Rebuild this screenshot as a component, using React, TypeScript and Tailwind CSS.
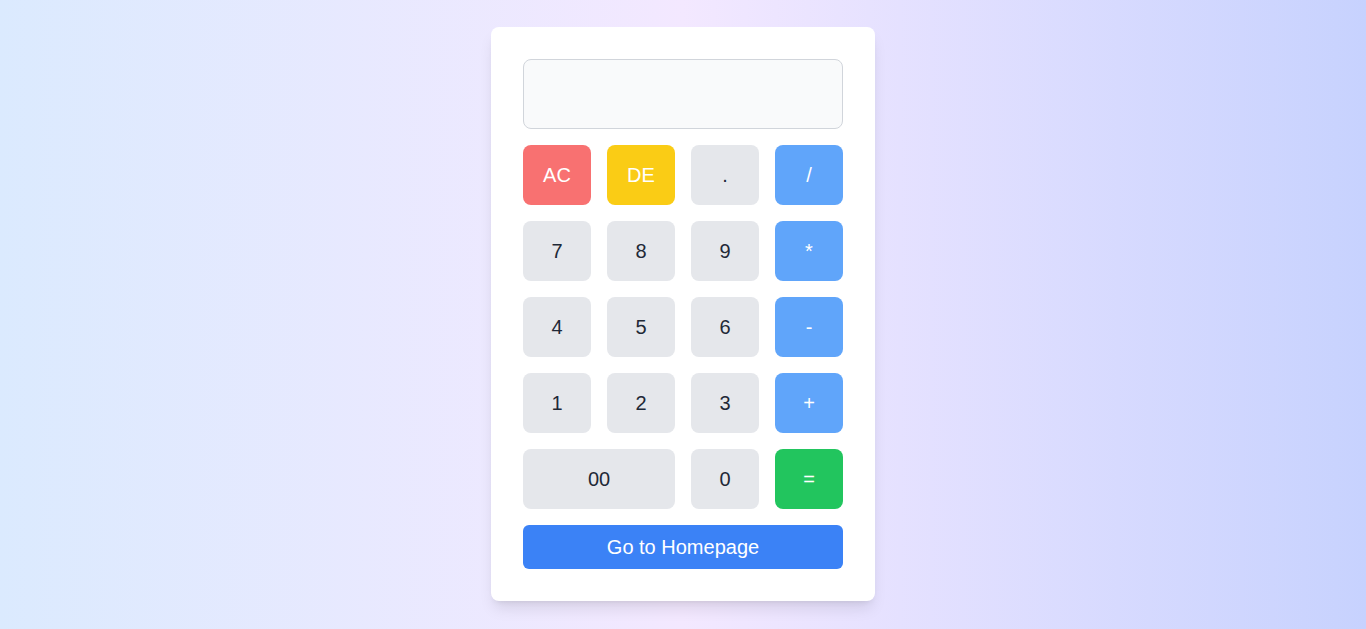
import { useState } from "react";

type Key = { label: string; kind: "num" | "op" | "clear" | "del" | "eq"; wide?: boolean };

const keys: Key[] = [
	{ label: "AC", kind: "clear" },
	{ label: "DE", kind: "del" },
	{ label: ".", kind: "num" },
	{ label: "/", kind: "op" },
	{ label: "7", kind: "num" },
	{ label: "8", kind: "num" },
	{ label: "9", kind: "num" },
	{ label: "*", kind: "op" },
	{ label: "4", kind: "num" },
	{ label: "5", kind: "num" },
	{ label: "6", kind: "num" },
	{ label: "-", kind: "op" },
	{ label: "1", kind: "num" },
	{ label: "2", kind: "num" },
	{ label: "3", kind: "num" },
	{ label: "+", kind: "op" },
	{ label: "00", kind: "num", wide: true },
	{ label: "0", kind: "num" },
	{ label: "=", kind: "eq" },
];

const styles: Record<Key["kind"], string> = {
	num: "bg-[#e5e7eb] text-[#1f2937] hover:bg-[#d1d5db]",
	op: "bg-[#60a5fa] text-white hover:bg-[#3b82f6]",
	clear: "bg-[#f87171] text-white hover:bg-[#ef4444]",
	del: "bg-[#facc15] text-white hover:bg-[#eab308]",
	eq: "bg-[#22c55e] text-white hover:bg-[#16a34a]",
};

export default function App() {
	const [value, setValue] = useState("");

	const press = (k: Key) => {
		if (k.kind === "clear") return setValue("");
		if (k.kind === "del") return setValue((v) => v.slice(0, -1));
		if (k.kind === "eq") {
			try {
				// eslint-disable-next-line no-new-func
				setValue(String(Function(`return (${value})`)()));
			} catch {
				setValue("Error");
			}
			return;
		}
		setValue((v) => v + k.label);
	};

	return (
		<div
			className="min-h-screen flex items-center justify-center bg-gradient-to-r from-[#dbeafe] via-[#f3e8ff] to-[#c7d2fe]"
			style={{ fontFamily: '"Liberation Sans", Arial, sans-serif' }}
		>
			<div className="w-96 bg-white rounded-lg shadow-lg p-8 mb-px">
				<input
					type="text"
					value={value}
					readOnly
					className="w-full h-[70px] mb-4 px-4 text-right text-2xl bg-[#f9fafb] border border-[#d1d5db] rounded-lg outline-none"
				/>

				<div className="grid grid-cols-4 gap-4">
					{keys.map((k) => (
						<button
							key={k.label}
							type="button"
							onClick={() => press(k)}
							className={`h-[60px] rounded-lg text-xl cursor-pointer transition-colors ${k.wide ? "col-span-2" : ""} ${styles[k.kind]}`}
						>
							{k.label}
						</button>
					))}
				</div>

				<button
					type="button"
					className="w-full h-11 mt-4 rounded-md bg-[#3b82f6] hover:bg-[#2563eb] text-white text-xl cursor-pointer"
				>
					Go to Homepage
				</button>
			</div>
		</div>
	);
}
